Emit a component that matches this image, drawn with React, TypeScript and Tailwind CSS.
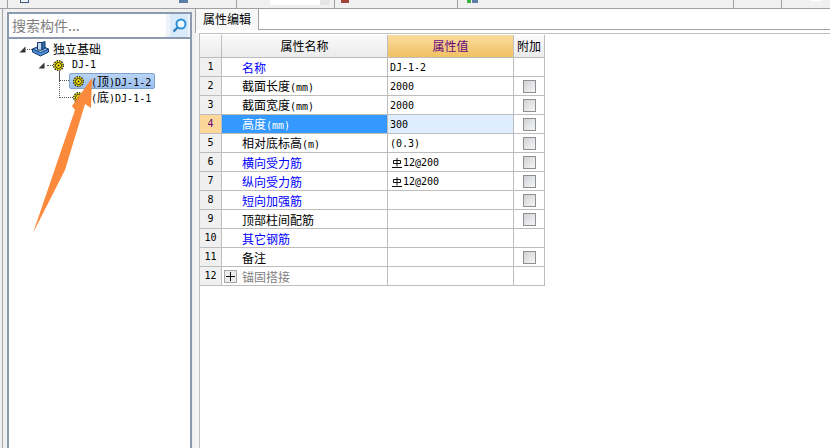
import React from 'react';

const cjk = "font-['Noto_Sans_CJK_SC',sans-serif]";
const mono = "font-['DejaVu_Sans_Mono',monospace] text-[10px]";

type Row = { name: string; value?: string; blue?: boolean; check?: boolean; rebar?: boolean };

const rows: Row[] = [
  { name: '名称', value: 'DJ-1-2', blue: true },
  { name: '截面长度(mm)', value: '2000', check: true },
  { name: '截面宽度(mm)', value: '2000', check: true },
  { name: '高度(mm)', value: '300', check: true },
  { name: '相对底标高(m)', value: '(0.3)', check: true },
  { name: '横向受力筋', value: '12@200', blue: true, check: true, rebar: true },
  { name: '纵向受力筋', value: '12@200', blue: true, check: true, rebar: true },
  { name: '短向加强筋', blue: true, check: true },
  { name: '顶部柱间配筋', check: true },
  { name: '其它钢筋', blue: true },
  { name: '备注', check: true },
  { name: '锚固搭接' },
];

// latin runs are narrower than the CJK ones, like the bitmap font in the app
const Mixed = ({ text }: { text: string }) => (
  <>
    {text.split(/([\x20-\x7e]+)/).filter(Boolean).map((part, i) =>
      /[\x20-\x7e]/.test(part) ? (
        <span key={i} className={mono}>{part}</span>
      ) : (
        <span key={i}>{part}</span>
      ),
    )}
  </>
);

const Gear = () => (
  <svg width="11" height="11" viewBox="0 0 11 11" className="shrink-0">
    <circle cx="5.5" cy="5.5" r="4.8" fill="#ffec00" stroke="#222" strokeWidth="1.3" strokeDasharray="1.5 1" />
    <circle cx="5.5" cy="5.5" r="3" fill="#ffec00" stroke="#222" strokeWidth="1" />
    <circle cx="5.5" cy="5.5" r="1" fill="#222" />
  </svg>
);

const Expander = () => (
  <svg width="7" height="7" viewBox="0 0 7 7" className="shrink-0">
    <path d="M6.5 0.5V6.5H0.5Z" fill="#333" />
  </svg>
);

const Checkbox = () => (
  <div className="w-[13px] h-[13px] border border-[#8f8f8f] bg-gradient-to-br from-[#cfd2d6] to-[#f6f6f6]" />
);

const RebarGlyph = () => (
  <svg width="10" height="10" viewBox="0 0 10 10" className="shrink-0 ml-[2px] mr-[1px]">
    <path d="M1.5 2.5H8.5V5.5H1.5ZM5 0V8.5M0 9.5H10" fill="none" stroke="#111" strokeWidth="1" />
  </svg>
);

export default function App() {
  return (
    <div className={`relative w-[830px] h-[448px] overflow-hidden bg-white text-xs text-black ${cjk}`}>
      {/* top toolbar, only the bottom edge is visible */}
      <div className="flex h-[9px] bg-[#f0f0f0] border-b border-[#a0a0a0]">
        <div className="w-[8px] border-r border-[#a0a0a0]" />
        <div className="w-[229px] border-r border-[#a0a0a0] relative">
          <div className="absolute left-[12px] top-0 w-[9px] h-[3px] border border-t-0 border-[#3a5a80]" />
          <div className="absolute right-[48px] top-0 w-[9px] h-[3px] bg-[#5b7da8]" />
        </div>
        <div className="w-[98px] border-r border-[#a0a0a0] flex">
          <div className="ml-[33px] w-[50px] h-[5px] bg-white" />
          <div className="w-[9px] h-[5px] bg-[#e4e4e4]" />
        </div>
        <div className="w-[123px] border-r border-[#a0a0a0] pl-[6px]">
          <div className="w-[8px] h-[3px] bg-[#a5433a]" />
        </div>
        <div className="w-[276px] border-r border-[#a0a0a0] flex pl-[9px] gap-[1px]">
          <div className="w-[4px] h-[3px] bg-[#3cb043]" />
          <div className="w-[6px] h-[3px] bg-[#5b7da8]" />
        </div>
        <div className="w-[48px] border-r border-[#a0a0a0]" />
        <div className="flex-1 flex justify-end pr-[8px]">
          <div className="w-[12px] h-[1px] bg-white" />
        </div>
      </div>

      <div className="flex h-[439px]">
        {/* component tree */}
        <div className="w-[195px] shrink-0 bg-[#f0f0f0] flex">
          <div className="w-[3px] border-r border-[#a8a8a8]" />
          <div className="w-[185px] ml-[4px] mt-[3px] flex flex-col border-x-2 border-t-2 border-[#8c9ab0] bg-white">
            <div className="h-[25px] flex bg-[#eef3fa] border-b-2 border-[#8c9ab0]">
              <div className="w-[157px] bg-white rounded-[2px] text-[14px] leading-[23px] pl-[3px] text-[#808080]">搜索构件...</div>
              <div className="ml-[4px] w-[18px] flex items-center justify-center bg-[#d9eafa]">
                <svg width="15" height="15" viewBox="0 0 15 15">
                  <circle cx="9" cy="6" r="4.5" fill="#eef8ff" stroke="#2f8fd6" strokeWidth="2" />
                  <path d="M5.5 9.5L1.5 13.5" stroke="#2f7fc0" strokeWidth="2.4" />
                </svg>
              </div>
            </div>
            <div className="flex flex-col pt-[2px]">
              <div className="flex items-center h-[16px] pl-[10px]">
                <Expander />
                <div className="w-[5px] ml-[1px] border-t border-dotted border-[#555]" />
                <svg width="17" height="16" viewBox="0 0 17 16" className="shrink-0">
                  <path d="M0.5 8L8.5 4.5L16.5 8V11L8.5 15L0.5 11Z" fill="#4a90dc" stroke="#17396b" />
                  <path d="M0.5 8L8.5 11.5L16.5 8" fill="#a9d0f5" stroke="#17396b" />
                  <path d="M5.5 1.5H10V9H5.5Z" fill="#c4daf0" stroke="#17396b" />
                  <path d="M10 1.5L13 0.5V7L10 9Z" fill="#2f6fb4" stroke="#17396b" />
                </svg>
                <span className="ml-[4px]">独立基础</span>
              </div>
              <div className="flex items-center h-[16px] pl-[29px]">
                <Expander />
                <div className="w-[6px] ml-[2px] border-t border-dotted border-[#555]" />
                <Gear />
                <span className={`ml-[8px] ${mono}`}>DJ-1</span>
              </div>
              <div className="flex items-center h-[16px] pl-[50px]">
                <div className="self-start w-[10px] h-[10px] -mt-[2px] border-l border-b border-dotted border-[#555]" />
                <div className="flex items-center h-[16px] w-[86px] pl-[3px] border border-[#7da2ce] rounded-[2px] bg-gradient-to-b from-[#b9d3f3] to-[#9cbfee]">
                  <Gear />
                  <span className="ml-[7px] whitespace-nowrap"><Mixed text="(" />顶<Mixed text=")DJ-1-2" /></span>
                </div>
              </div>
              <div className="flex items-center h-[16px] pl-[50px]">
                <div className="self-start w-[14px] h-[25px] -mt-[16px] border-l border-b border-dotted border-[#555]" />
                <Gear />
                <span className="ml-[7px] whitespace-nowrap"><Mixed text="(" />底<Mixed text=")DJ-1-1" /></span>
              </div>
            </div>
          </div>
        </div>

        {/* property editor */}
        <div className="flex-1 flex flex-col min-w-0">
          <div className="flex h-[21px] border-b border-[#a0a0a0]">
            <div className="w-[64px] h-[21px] bg-[#f8f8f8] border-x border-[#a0a0a0] pl-[7px] text-[12px] leading-[19px]">属性编辑</div>
          </div>
          <div className="h-[3px] border-l border-[#a0a0a0]" />
          <div className="flex flex-1">
            <div className="w-[4px] bg-[#f5f5f5]" />
            <div className="flex-1 border-l border-t border-[#c0c0c0] pt-[1px]">
              <div className="grid grid-cols-[22px_166px_126px_31px] grid-rows-[23px] auto-rows-[19px] w-[345px]">
                <div className="bg-gradient-to-b from-[#fafafa] to-[#ebebeb] border-r border-b border-[#bdbdbd]" />
                <div className="bg-gradient-to-b from-[#fafafa] to-[#ebebeb] border-r border-b border-[#bdbdbd] text-center leading-[22px]">属性名称</div>
                <div className="bg-gradient-to-b from-[#fbdc9e] to-[#f1c062] border-r border-b border-[#bdbdbd] text-center leading-[22px] text-[#66087c]">属性值</div>
                <div className="bg-gradient-to-b from-[#fafafa] to-[#ebebeb] border-r border-b border-[#bdbdbd] text-center leading-[22px]">附加</div>
                {rows.map((row, i) => {
                  const active = i === 3;
                  return (
                    <React.Fragment key={row.name}>
                      <div className={`border-r border-b border-[#bdbdbd] text-center leading-[18px] ${mono} ${active ? 'bg-[#fbd79a] text-[#66087c]' : 'bg-[#f0f0f0]'}`}>
                        {i + 1}
                      </div>
                      <div className={`flex items-center pt-[1px] border-r border-b border-[#bdbdbd] leading-[17px] ${active ? 'bg-[#3399ff] text-white' : ''} ${row.blue ? 'text-[#0000ff]' : ''} ${i === 11 ? 'text-[#808080]' : ''}`}>
                        {i === 11 ? (
                          <div className="ml-[2px] mr-[5px] -mt-[1px] w-[13px] h-[13px] border border-[#a8a8a8] bg-[#ececec] flex items-center justify-center">
                            <svg width="9" height="9" viewBox="0 0 9 9"><path d="M0 4.5H9M4.5 0V9" stroke="#111" /></svg>
                          </div>
                        ) : (
                          <div className="w-[20px] shrink-0" />
                        )}
                        <span className="whitespace-nowrap"><Mixed text={row.name} /></span>
                      </div>
                      <div className={`flex items-center pt-[1px] border-r border-b border-[#bdbdbd] pl-[2px] ${mono} ${active ? 'bg-[#deeeff]' : ''}`}>
                        {row.rebar && <RebarGlyph />}
                        {row.value}
                      </div>
                      <div className="flex items-center justify-center border-r border-b border-[#bdbdbd]">
                        {row.check && <Checkbox />}
                      </div>
                    </React.Fragment>
                  );
                })}
              </div>
            </div>
          </div>
        </div>
      </div>

      {/* annotation arrow */}
      <svg width="120" height="170" viewBox="0 0 120 170" className="absolute left-0 top-[70px] pointer-events-none">
        <path d="M33 163L75 40L72 36L92 8L91 38L85 34L65 100Z" fill="#fb8a3c" />
      </svg>
    </div>
  );
}
